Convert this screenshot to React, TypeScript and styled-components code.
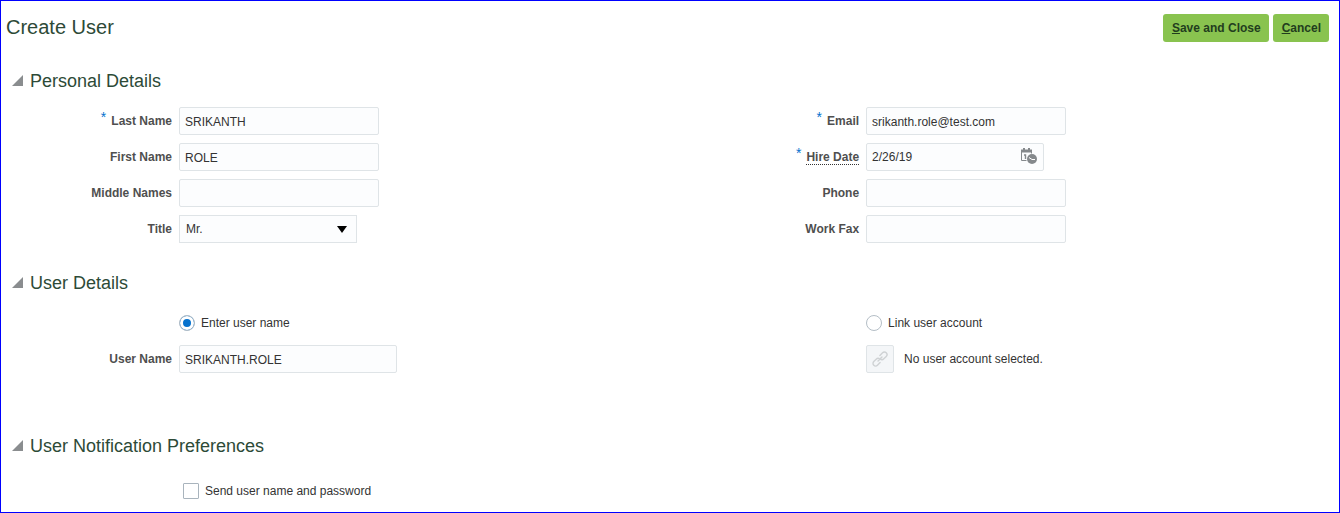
import React, { useState } from "react";
import styled, { createGlobalStyle } from "styled-components";

const GlobalStyle = createGlobalStyle`
  *, *::before, *::after { box-sizing: border-box; }
  body {
    margin: 0;
    background: #ffffff;
    color: #333333;
    font: 12px/16px "Liberation Sans", Arial, Helvetica, sans-serif;
  }
  input, select, button { font: inherit; color: inherit; margin: 0; }
`;

const Page = styled.main`
  min-height: 100vh;
  border: 1px solid #0000ff;
  padding-bottom: 12px;
`;

const Header = styled.header`
  display: flex;
  justify-content: space-between;
  align-items: flex-start;
  padding: 13px 10px 0 5px;
`;

const PageTitle = styled.h1`
  margin: 0;
  font-size: 20px;
  line-height: 26px;
  font-weight: 400;
  color: #2d4a37;
`;

const Actions = styled.div`
  display: flex;
  gap: 4px;
`;

const ActionButton = styled.button`
  height: 28px;
  padding: 0 8px 0 9px;
  border: 0;
  border-radius: 3px;
  background: #89c34f;
  color: #223d1e;
  font-weight: 700;
  cursor: pointer;
`;

const Section = styled.section<{ $gap: number }>`
  padding-top: ${(p) => p.$gap}px;
`;

const SectionHeading = styled.h2`
  display: flex;
  align-items: center;
  gap: 7px;
  margin: 0;
  padding-left: 11px;
  font-size: 18px;
  line-height: 24px;
  font-weight: 400;
  color: #2d4a37;
`;

const Disclosure = styled.button`
  display: flex;
  padding: 0 0 2px;
  border: 0;
  background: none;
  cursor: pointer;
`;

const Columns = styled.div<{ $top: number }>`
  display: grid;
  grid-template-columns: minmax(0, 19fr) minmax(0, 18fr);
  padding-top: ${(p) => p.$top}px;
`;

const Column = styled.div<{ $gap?: number }>`
  display: flex;
  flex-direction: column;
  gap: ${(p) => p.$gap ?? 8}px;
`;

const Row = styled.div`
  display: grid;
  grid-template-columns: 171px minmax(0, 1fr);
  column-gap: 7px;
  align-items: center;
`;

const LabelCell = styled.div`
  display: flex;
  justify-content: flex-end;
  align-items: flex-start;
  gap: 5px;
`;

const Required = styled.span`
  font-size: 14px;
  line-height: 8px;
  color: #0572ce;
`;

const Label = styled.label<{ $hint?: boolean }>`
  font-weight: 700;
  color: #4f4f4f;
  text-decoration: ${(p) => (p.$hint ? "underline dotted #333333 1px" : "none")};
  text-underline-offset: 3px;
  text-decoration-skip-ink: none;
`;

const TextInput = styled.input<{ $width: number }>`
  width: ${(p) => p.$width}px;
  max-width: 100%;
  height: 28px;
  padding: 1px 5px 0;
  border: 1px solid #dfe4e7;
  border-radius: 2px;
  background: #fcfdfe;
`;

const Overlaid = styled.div`
  position: relative;
  width: 178px;
`;

const Select = styled.select`
  appearance: none;
  display: block;
  width: 100%;
  height: 28px;
  padding: 0 6px;
  border: 1px solid #dfe4e7;
  border-radius: 0;
  background: #fcfdfe;
`;

const SelectArrow = styled.svg`
  position: absolute;
  right: 10px;
  top: 11px;
  pointer-events: none;
`;

const DateInput = styled(TextInput)`
  display: block;
  padding: 0 28px 0 5px;
`;

const PickerButton = styled.button`
  position: absolute;
  right: 6px;
  top: 5px;
  display: flex;
  padding: 0;
  border: 0;
  background: none;
  cursor: pointer;
`;

const Choice = styled.label<{ $indent?: number }>`
  grid-column: 2;
  display: flex;
  align-items: center;
  gap: 6px;
  padding-left: ${(p) => p.$indent ?? 0}px;
`;

const Radio = styled.input`
  appearance: none;
  width: 16px;
  height: 16px;
  border: 1px solid #b4bec6;
  border-radius: 50%;
  background: #ffffff;
  &:checked {
    background: #0572ce;
    box-shadow: inset 0 0 0 3px #ffffff;
  }
`;

const CheckBox = styled.input`
  appearance: none;
  width: 16px;
  height: 16px;
  border: 1px solid #a9b4bd;
  border-radius: 1px;
  background: #ffffff;
  &:checked {
    background: #0572ce;
    box-shadow: inset 0 0 0 3px #ffffff;
  }
`;

const Account = styled.div`
  grid-column: 2;
  display: flex;
  align-items: center;
  gap: 10px;
`;

const LinkButton = styled.button`
  display: flex;
  align-items: center;
  justify-content: center;
  width: 28px;
  height: 28px;
  padding: 0;
  border: 1px solid #dfe4e7;
  border-radius: 2px;
  background: #f4f6f8;
`;

type GroupProps = {
  title: string;
  gap: number;
  children: React.ReactNode;
};

function Group({ title, gap, children }: GroupProps) {
  const [open, setOpen] = useState(true);
  return (
    <Section $gap={gap}>
      <SectionHeading>
        <Disclosure
          type="button"
          aria-expanded={open}
          aria-label={title}
          onClick={() => setOpen(!open)}
        >
          <svg width="11" height="11" viewBox="0 0 11 11" aria-hidden="true">
            <path d={open ? "M11 0V11H0Z" : "M2 0L9 5.5L2 11Z"} fill="#8a8d8f" />
          </svg>
        </Disclosure>
        {title}
      </SectionHeading>
      {open && children}
    </Section>
  );
}

type FieldProps = {
  id: string;
  label: string;
  required?: boolean;
  hint?: boolean;
  children: React.ReactNode;
};

function Field({ id, label, required, hint, children }: FieldProps) {
  return (
    <Row>
      <LabelCell>
        {required && <Required aria-hidden="true">*</Required>}
        <Label htmlFor={id} $hint={hint}>
          {label}
        </Label>
      </LabelCell>
      {children}
    </Row>
  );
}

function CalendarClockIcon() {
  return (
    <svg width="18" height="17" viewBox="0 0 18 17" aria-hidden="true">
      <path d="M1 1.5H12V4.5H1Z M3 0H5V3H3Z M8 0H10V3H8Z" fill="#85898c" />
      <path d="M1.5 3V12.5H6.5" fill="none" stroke="#85898c" />
      <path d="M11.5 3V5.5" fill="none" stroke="#85898c" />
      <path d="M4 7H5.5V11" fill="none" stroke="#85898c" strokeWidth="1.4" />
      <circle cx="12" cy="11" r="5" fill="#85898c" />
      <path d="M9 9.5L12 11.5H15" fill="none" stroke="#ffffff" />
    </svg>
  );
}

function ChainIcon() {
  return (
    <svg width="16" height="16" viewBox="0 0 16 16" aria-hidden="true">
      <g
        transform="rotate(-45 8 8)"
        fill="none"
        stroke="#cfd2d4"
        strokeWidth="1.4"
        strokeLinecap="round"
      >
        <path d="M5.5 10.6H1.8A2.6 2.6 0 0 1 1.8 5.4H5.2A2.6 2.6 0 0 1 7.8 8H5.2" />
        <path d="M10.5 5.4H14.2A2.6 2.6 0 0 1 14.2 10.6H10.8A2.6 2.6 0 0 1 8.2 8H10.8" />
      </g>
    </svg>
  );
}

export default function App() {
  const [account, setAccount] = useState("enter");
  return (
    <>
      <GlobalStyle />
      <Page>
        <Header>
          <PageTitle>Create User</PageTitle>
          <Actions>
            <ActionButton type="button">
              <u>S</u>ave and Close
            </ActionButton>
            <ActionButton type="button">
              <u>C</u>ancel
            </ActionButton>
          </Actions>
        </Header>

        <Group title="Personal Details" gap={27}>
          <Columns $top={14}>
            <Column>
              <Field id="last" label="Last Name" required>
                <TextInput id="last" $width={200} defaultValue="SRIKANTH" required />
              </Field>
              <Field id="first" label="First Name">
                <TextInput id="first" $width={200} defaultValue="ROLE" />
              </Field>
              <Field id="middle" label="Middle Names">
                <TextInput id="middle" $width={200} />
              </Field>
              <Field id="title" label="Title">
                <Overlaid>
                  <Select id="title" defaultValue="Mr.">
                    <option>Mr.</option>
                    <option>Mrs.</option>
                    <option>Ms.</option>
                  </Select>
                  <SelectArrow width="10" height="7" viewBox="0 0 10 7" aria-hidden="true">
                    <path d="M0 0H10L5 7Z" fill="#000000" />
                  </SelectArrow>
                </Overlaid>
              </Field>
            </Column>
            <Column>
              <Field id="email" label="Email" required>
                <TextInput id="email" $width={200} defaultValue="srikanth.role@test.com" required />
              </Field>
              <Field id="hire" label="Hire Date" required hint>
                <Overlaid>
                  <DateInput id="hire" $width={178} defaultValue="2/26/19" required />
                  <PickerButton type="button" aria-label="Select date">
                    <CalendarClockIcon />
                  </PickerButton>
                </Overlaid>
              </Field>
              <Field id="phone" label="Phone">
                <TextInput id="phone" $width={200} />
              </Field>
              <Field id="fax" label="Work Fax">
                <TextInput id="fax" $width={200} />
              </Field>
            </Column>
          </Columns>
        </Group>

        <Group title="User Details" gap={28}>
          <Columns $top={20}>
            <Column $gap={14}>
              <Row>
                <Choice>
                  <Radio
                    type="radio"
                    name="account"
                    checked={account === "enter"}
                    onChange={() => setAccount("enter")}
                  />
                  Enter user name
                </Choice>
              </Row>
              <Field id="user" label="User Name">
                <TextInput id="user" $width={218} defaultValue="SRIKANTH.ROLE" />
              </Field>
            </Column>
            <Column $gap={14}>
              <Row>
                <Choice>
                  <Radio
                    type="radio"
                    name="account"
                    checked={account === "link"}
                    onChange={() => setAccount("link")}
                  />
                  Link user account
                </Choice>
              </Row>
              <Row>
                <Account>
                  <LinkButton type="button" aria-label="Link user account" disabled={account !== "link"}>
                    <ChainIcon />
                  </LinkButton>
                  No user account selected.
                </Account>
              </Row>
            </Column>
          </Columns>
        </Group>

        <Group title="User Notification Preferences" gap={61}>
          <Columns $top={25}>
            <Row>
              <Choice $indent={4}>
                <CheckBox type="checkbox" />
                Send user name and password
              </Choice>
            </Row>
          </Columns>
        </Group>
      </Page>
    </>
  );
}
